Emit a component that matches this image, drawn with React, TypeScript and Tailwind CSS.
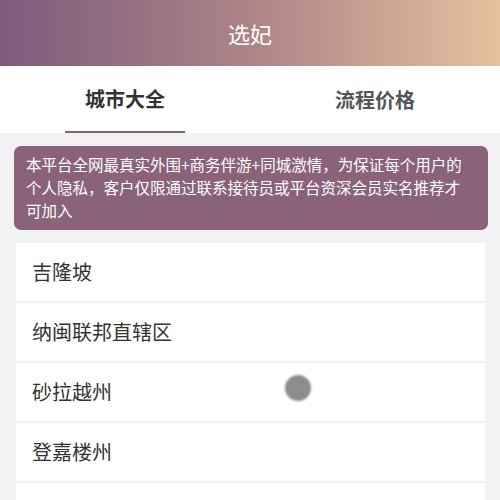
export default function App() {
  const cities = ['吉隆坡', '纳闽联邦直辖区', '砂拉越州', '登嘉楼州', '彭亨州', '柔佛州'];

  return (
    <div
      className="relative min-h-screen bg-[#f2f2f4]"
      style={{ fontFamily: '"Noto Sans CJK SC", "Noto Sans", sans-serif' }}
    >
      <header className="h-[66px] flex items-center justify-center bg-gradient-to-r from-[#7e5a7c] via-[#ad8486] to-[#e4c29d]">
        <h1 className="text-[22px] text-white">选妃</h1>
      </header>

      <div className="flex h-[67px] bg-white">
        <div className="flex-1 flex flex-col items-center">
          <div className="flex-1 flex items-center text-[20px] font-bold text-[#333]">城市大全</div>
          <div className="w-[120px] h-[2px] bg-[#7f6579]" />
        </div>
        <div className="flex-1 flex items-center justify-center text-[20px] font-bold text-[#555]">
          流程价格
        </div>
      </div>

      <div className="px-[14px] pt-[13px] pr-[12px]">
        <div className="rounded-[7px] bg-[#8a6279] pl-3 pr-[16px] pt-[7px] pb-[8px] text-[15.5px] leading-[23px] text-white">
          本平台全网最真实外围+商务伴游+同城激情，为保证每个用户的个人隐私，客户仅限通过联系接待员或平台资深会员实名推荐才可加入
        </div>
      </div>

      <div className="mx-[16px] mr-[15px] mt-[13px] flex flex-col gap-[2px]">
        {cities.map((city) => (
          <div key={city} className="h-[58px] bg-white flex items-center pl-[16px] text-[20px] text-[#333]">
            {city}
          </div>
        ))}
      </div>

      <div className="absolute left-[285px] top-[375px] w-[26px] h-[26px] rounded-full bg-[#8c8c8c] blur-[1px]" />
    </div>
  );
}
